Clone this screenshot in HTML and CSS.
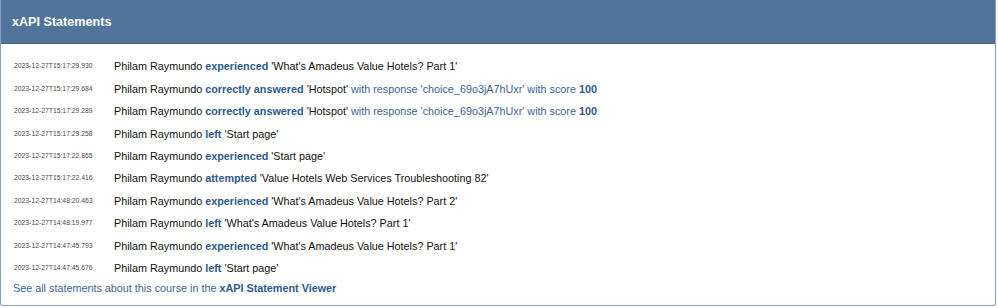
FILE: index.html
```html
<!DOCTYPE html>
<html lang="en">
<head>
    <meta charset="UTF-8">
    <title>xAPI Statements</title>
    <link rel="stylesheet" href="styles.css">
</head>
<body>
    <div class="panel">
        <div class="panel-heading">xAPI Statements</div>
        <div class="panel-body">
            <ul class="statements">
                <li><span class="stamp">2023-12-27T15:17:29.930</span><span class="stmt">Philam Raymundo <b>experienced</b> 'What's Amadeus Value Hotels? Part 1'</span></li>
                <li><span class="stamp">2023-12-27T15:17:29.684</span><span class="stmt">Philam Raymundo <b>correctly answered</b> 'Hotspot' <span class="extra">with response 'choice_69o3jA7hUxr' with score <b>100</b></span></span></li>
                <li><span class="stamp">2023-12-27T15:17:29.289</span><span class="stmt">Philam Raymundo <b>correctly answered</b> 'Hotspot' <span class="extra">with response 'choice_69o3jA7hUxr' with score <b>100</b></span></span></li>
                <li><span class="stamp">2023-12-27T15:17:29.258</span><span class="stmt">Philam Raymundo <b>left</b> 'Start page'</span></li>
                <li><span class="stamp">2023-12-27T15:17:22.865</span><span class="stmt">Philam Raymundo <b>experienced</b> 'Start page'</span></li>
                <li><span class="stamp">2023-12-27T15:17:22.416</span><span class="stmt">Philam Raymundo <b>attempted</b> 'Value Hotels Web Services Troubleshooting 82'</span></li>
                <li><span class="stamp">2023-12-27T14:48:20.463</span><span class="stmt">Philam Raymundo <b>experienced</b> 'What's Amadeus Value Hotels? Part 2'</span></li>
                <li><span class="stamp">2023-12-27T14:48:19.977</span><span class="stmt">Philam Raymundo <b>left</b> 'What's Amadeus Value Hotels? Part 1'</span></li>
                <li><span class="stamp">2023-12-27T14:47:45.793</span><span class="stmt">Philam Raymundo <b>experienced</b> 'What's Amadeus Value Hotels? Part 1'</span></li>
                <li><span class="stamp">2023-12-27T14:47:45.676</span><span class="stmt">Philam Raymundo <b>left</b> 'Start page'</span></li>
            </ul>
            <a class="viewer-link" href="#viewer">See all statements about this course in the <b>xAPI Statement Viewer</b></a>
        </div>
    </div>
</body>
</html>
```

FILE: styles.css
```css
/* ===== base ===== */
*{margin:0;padding:0;box-sizing:border-box;}
body{
    background:#fff;
    font-family:"Liberation Sans",Arial,Helvetica,sans-serif;
    color:#111;
}

/* ===== panel ===== */
.panel{
    width:996px;
    height:306px;
    border:1px solid #86a0c0;
    border-top:none;
    border-radius:0 0 3px 3px;
    overflow:hidden;
}
.panel-heading{
    height:44px;
    padding:0 11px;
    display:flex;
    align-items:center;
    background:#51749a;
    border-bottom:1px solid #45668b;
    color:#fff;
    font-size:12.6px;
    font-weight:700;
}
.panel-body{padding:11px 11px 0 12px;}

/* ===== statements ===== */
.statements{list-style:none;}
.statements li{
    display:flex;
    align-items:center;
    height:22.45px;
    line-height:22px;
}
.stamp{
    width:101px;
    padding-left:1px;
    flex-shrink:0;
    font-size:6.8px;
    color:#4a4a4a;
}
.stmt{font-size:10.8px;}
.stmt b{color:#2d5a8e;}
.extra{color:#3b6496;}
.extra b{color:#2d5a8e;}

/* ===== footer link ===== */
.viewer-link{
    display:block;
    margin-top:3px;
    font-size:10.8px;
    color:#3b6496;
    text-decoration:none;
}
.viewer-link b{color:#2d5a8e;}
```
